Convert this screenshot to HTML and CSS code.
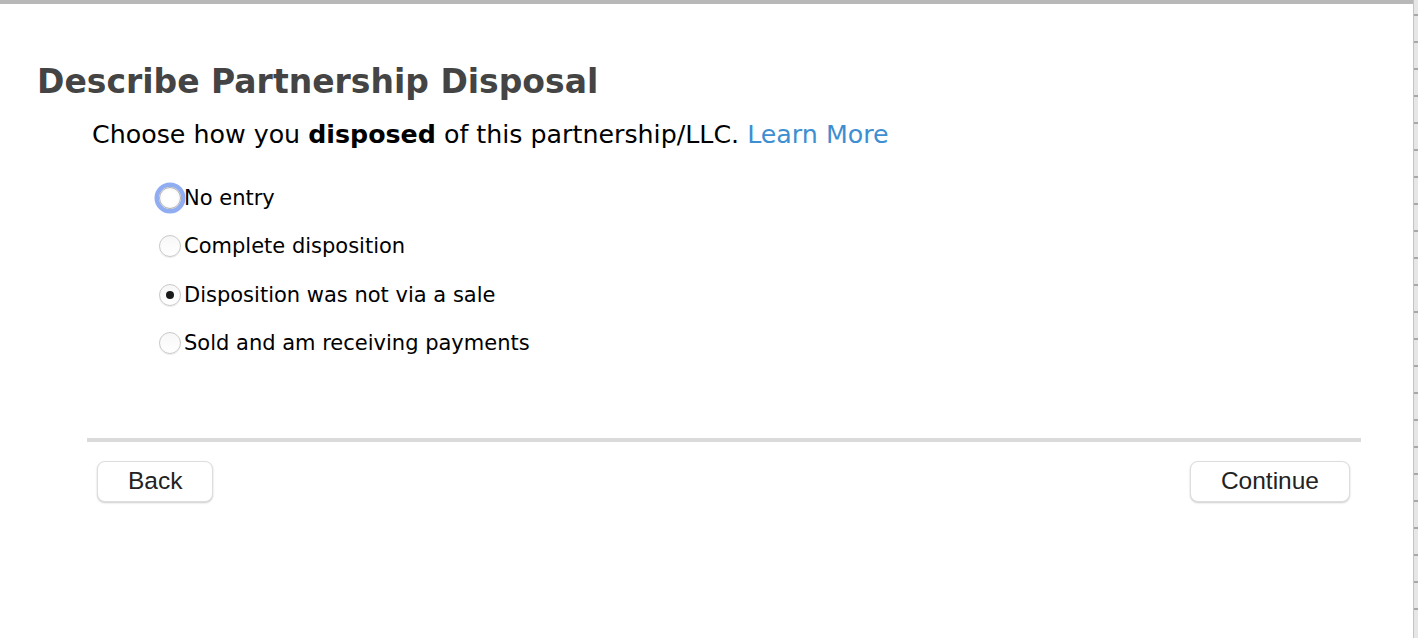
FILE: index.html
```html
<!DOCTYPE html>
<html>
<head>
<meta charset="utf-8">
<link rel="stylesheet" href="styles.css">
</head>
<body>
<div class="window">
  <div class="main">
    <div class="topbar"></div>
    <main class="page">
      <h1 class="title">Describe Partnership Disposal</h1>
      <p class="lead">Choose how you <b>disposed</b> of this partnership/LLC. <a class="link" href="#">Learn More</a></p>
      <ul class="options">
        <li class="option"><span class="radio focused"></span><span class="label">No entry</span></li>
        <li class="option"><span class="radio"></span><span class="label">Complete disposition</span></li>
        <li class="option"><span class="radio checked"></span><span class="label">Disposition was not via a sale</span></li>
        <li class="option"><span class="radio"></span><span class="label">Sold and am receiving payments</span></li>
      </ul>
      <div class="footer">
        <button class="btn">Back</button>
        <button class="btn">Continue</button>
      </div>
    </main>
  </div>
  <div class="ruler"></div>
</div>
</body>
</html>
```
FILE: styles.css
```css
html, body { margin: 0; padding: 0; background: #fff; }
body { width: 1418px; height: 638px; overflow: hidden; font-family: "DejaVu Sans", sans-serif; }
.window { display: flex; height: 638px; }
.main { flex: 1; display: flex; flex-direction: column; }
.topbar { height: 4px; background: #b8b8b8; }
.page { flex: 1; padding: 0 0 0 37px; }
.title { margin: 58px 0 0; font-size: 33px; font-weight: bold; color: #444; line-height: 40px; }
.lead { margin: 18px 0 0 55px; font-size: 25.3px; line-height: 30px; color: #000; }
.lead b { font-weight: bold; }
.link { color: #3d8fd1; text-decoration: none; }
.options { list-style: none; margin: 34px 0 0 122px; padding: 0; display: flex; flex-direction: column; gap: 20.3px; }
.option { display: flex; align-items: center; height: 28px; }
.label { font-size: 21px; color: #000; }
.radio { width: 22px; height: 22px; box-sizing: border-box; border-radius: 50%; border: 1px solid #c9c9c9; background: linear-gradient(#f7f7f7, #fff); box-shadow: 0 1px 1px rgba(0,0,0,0.08); margin-right: 3px; position: relative; }
.radio.focused { box-shadow: 0 0 0 4.5px #90adf2; border-color: #b0b0b0; background: radial-gradient(circle, #fff 50%, #ececec 100%); }
.radio.checked::after { content: ""; position: absolute; left: 6px; top: 6px; width: 8px; height: 8px; border-radius: 50%; background: #1a1a1a; }
.footer { margin: 81px 0 0 50px; width: 1274px; border-top: 4px solid #dadada; display: flex; justify-content: space-between; padding: 19px 10px 0; box-sizing: border-box; }
.btn { font-family: "Liberation Sans", sans-serif; font-size: 24.5px; color: #222; background: #fff; border: 1px solid #ddd; border-radius: 8px; box-shadow: 0 1px 2px rgba(0,0,0,0.2); height: 41px; padding: 0 30px; }
.btn + .btn { margin-right: 1px; }
.ruler { width: 4px; border-left: 1px solid #c4c4c4; background: repeating-linear-gradient(#e6e6e6 0 25px, #a8a8a8 25px 27px); background-position: 0 -11px; }
```
